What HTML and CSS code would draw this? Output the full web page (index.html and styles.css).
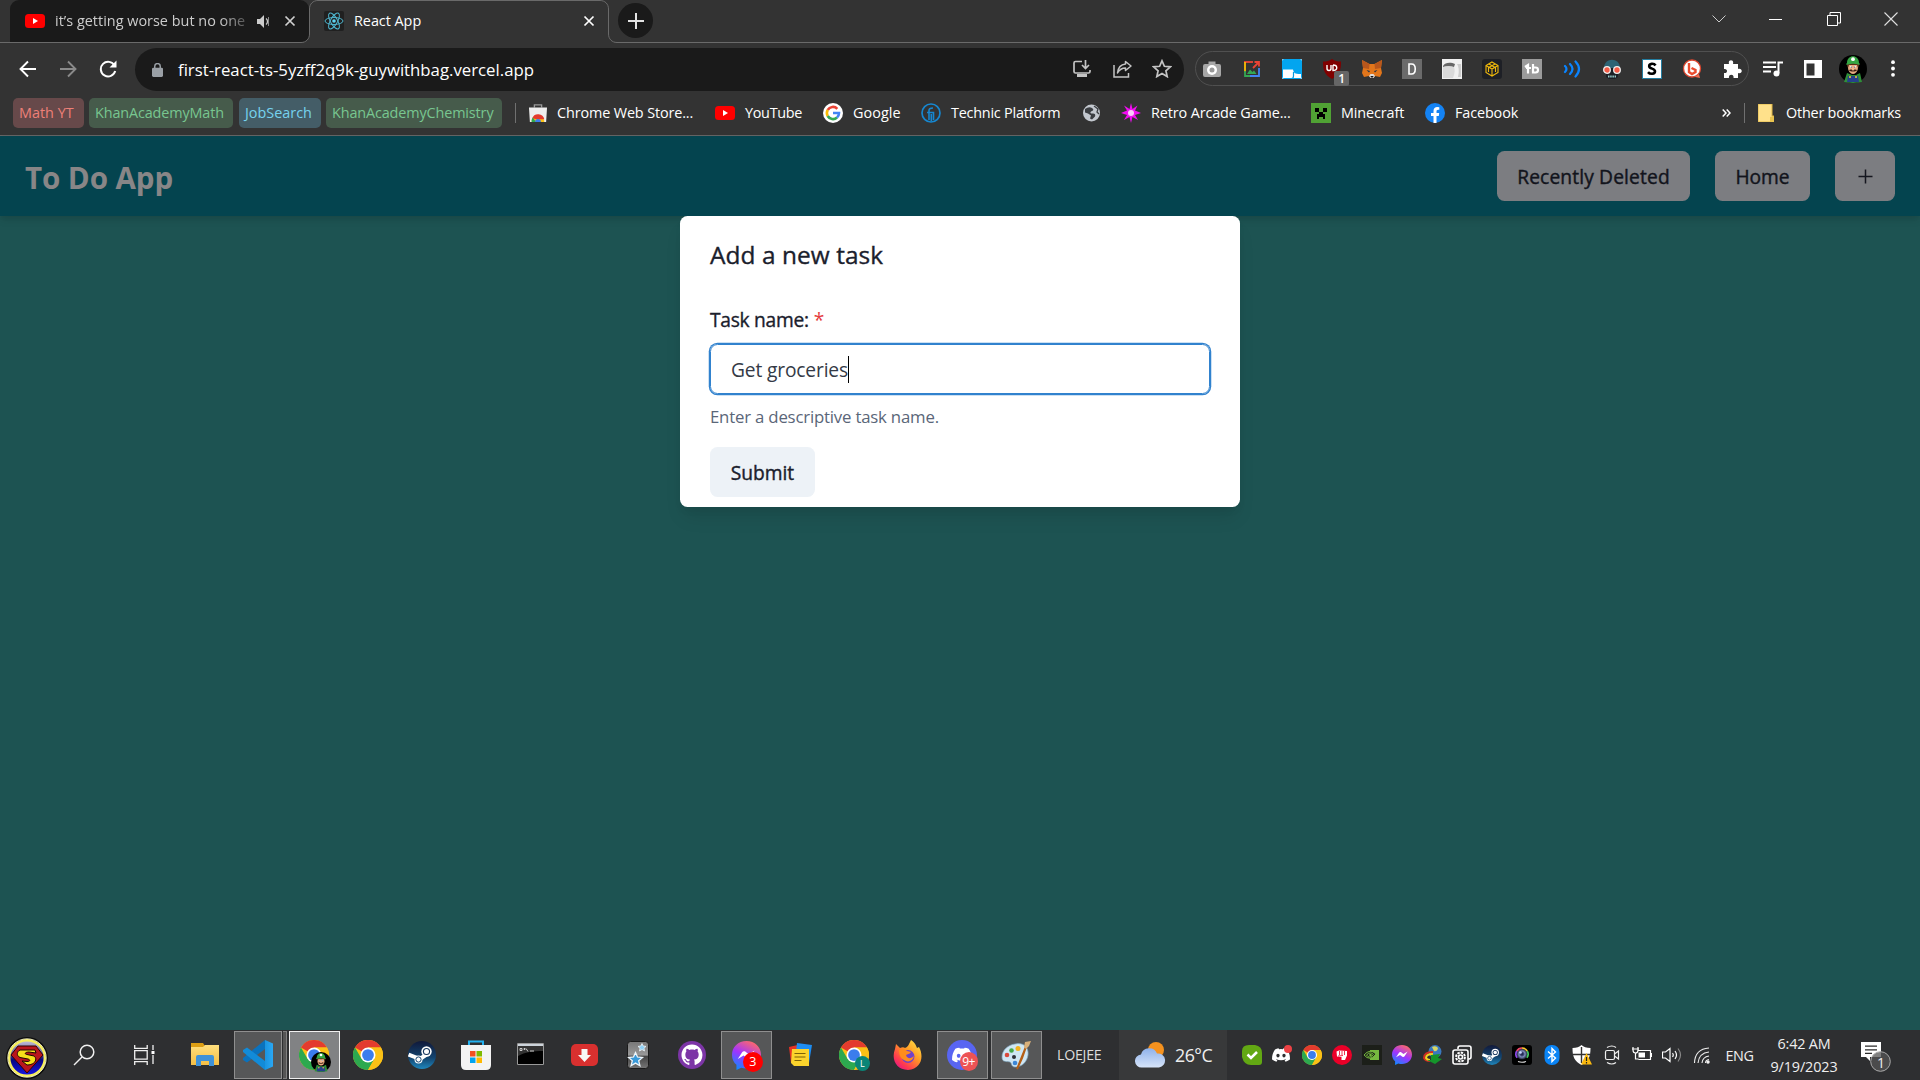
FILE: index.html
```html
<!DOCTYPE html>
<html lang="en">
<head>
<meta charset="utf-8">
<title>React App</title>
<link rel="stylesheet" href="styles.css">
</head>
<body>
<svg class="defs" aria-hidden="true">
  <defs>
    <linearGradient id="g-vs" x1="0" y1="0" x2="1" y2="0"><stop offset="0" stop-color="#1a94e0"/><stop offset="1" stop-color="#2aa8f5"/></linearGradient>
    <linearGradient id="g-msg" x1="0.2" y1="1" x2="0.7" y2="0"><stop offset="0" stop-color="#0a8cff"/><stop offset="0.5" stop-color="#a033ff"/><stop offset="1" stop-color="#ff6a68"/></linearGradient>
    <linearGradient id="g-steam" x1="0" y1="0" x2="0" y2="1"><stop offset="0" stop-color="#11193a"/><stop offset="0.6" stop-color="#13446f"/><stop offset="1" stop-color="#1f87bd"/></linearGradient>
    <linearGradient id="g-ff" x1="1" y1="0" x2="0.2" y2="1"><stop offset="0" stop-color="#fff04a"/><stop offset="0.45" stop-color="#ff9a25"/><stop offset="0.8" stop-color="#ff3a4f"/><stop offset="1" stop-color="#e31587"/></linearGradient>
    <linearGradient id="g-cloud" x1="0" y1="0" x2="0" y2="1"><stop offset="0" stop-color="#8fb2ea"/><stop offset="1" stop-color="#d6e4f9"/></linearGradient>
    <linearGradient id="g-folder" x1="0" y1="0" x2="0" y2="1"><stop offset="0" stop-color="#ffdf7d"/><stop offset="1" stop-color="#f5bf45"/></linearGradient>
    <linearGradient id="g-orb" x1="0" y1="0" x2="0" y2="1"><stop offset="0" stop-color="#c9c4dc"/><stop offset="0.35" stop-color="#67679f"/><stop offset="0.55" stop-color="#07077e"/><stop offset="1" stop-color="#1616e8"/></linearGradient>
    <linearGradient id="g-anki" x1="0" y1="0" x2="0" y2="1"><stop offset="0" stop-color="#777"/><stop offset="0.5" stop-color="#999"/><stop offset="0.55" stop-color="#444"/><stop offset="1" stop-color="#777"/></linearGradient>
    <radialGradient id="g-lens"><stop offset="0.2" stop-color="#222a55"/><stop offset="0.55" stop-color="#7d8dbd"/><stop offset="1" stop-color="#15182a"/></radialGradient>

    <symbol id="chrome" viewBox="0 0 48 48">
      <circle cx="24" cy="24" r="24" fill="#fbc116"/>
      <path d="M24 24 3.200 12A24 24 0 0 1 44.800 12H24Z" fill="#e33b2e"/>
      <path d="M3.200 12A24 24 0 0 0 24 48L34.400 30 13.600 30Z" fill="#2da94f"/>
      <path d="M24 12H44.800A24 24 0 0 1 24 48L34.400 30Z" fill="#fbc116"/>
      <circle cx="24" cy="24" r="12" fill="#fff"/><circle cx="24" cy="24" r="9.400" fill="#3b7ded"/>
    </symbol>
    <symbol id="youtube" viewBox="0 0 20 18">
      <rect width="20" height="18" rx="4" fill="#f00"/><path d="M8 6v6l5-3z" fill="#fff"/>
    </symbol>
    <symbol id="luigi" viewBox="0 0 28 28">
      <circle cx="14" cy="14" r="14" fill="#000"/>
      <path d="M5 27 8 18l5 2h4l4-2 2 9-9 1z" fill="#2f8f39"/>
      <path d="M9 21h10l1 6H8z" fill="#26408c"/><circle cx="11" cy="22" r="1" fill="#f2cf35"/><circle cx="17" cy="22" r="1" fill="#f2cf35"/>
      <ellipse cx="14" cy="12.500" rx="5" ry="6.500" fill="#e9ad82"/>
      <path d="M8 11V8h12v3l-1 2-.7-3H9.700L9 13z" fill="#5b2c17"/>
      <path d="M8 8c0-9 12-9 12 0 1 .5 1 2 0 1.800-4-1.500-8-1.500-12 0-1 .2-1-1.300 0-1.800z" fill="#35a743"/>
      <circle cx="14" cy="4.200" r="1.900" fill="#fff"/>
      <circle cx="12" cy="11.800" r="1" fill="#fff"/><circle cx="16" cy="11.800" r="1" fill="#fff"/><circle cx="12.300" cy="12" r=".6" fill="#124"/><circle cx="15.700" cy="12" r=".6" fill="#124"/>
      <path d="M10 15c2-1 6-1 8 0-1 2-7 2-8 0z" fill="#3a1b10"/><circle cx="14" cy="14" r="1.500" fill="#f0b58c"/>
    </symbol>
    <symbol id="steam" viewBox="0 0 28 28">
      <circle cx="14" cy="14" r="14" fill="url(#g-steam)"/>
      <path d="M.6 13.500 12 18l6.500-4.500" fill="none" stroke="#fff" stroke-width="4"/>
      <circle cx="18.500" cy="10.500" r="5.200" fill="#fff"/><circle cx="18.500" cy="10.500" r="3.600" fill="#15345c"/><circle cx="18.500" cy="10.500" r="2.500" fill="#fff"/>
      <circle cx="10.500" cy="18.500" r="4" fill="#fff"/><circle cx="10.500" cy="18.500" r="2.600" fill="none" stroke="#16456f" stroke-width="1"/>
    </symbol>
    <symbol id="messenger" viewBox="0 0 28 28">
      <path d="M14 0C6 0 0 5.700 0 13.400c0 4 1.600 7.300 4.300 9.500V28l4.600-2.200c1.600.5 3.300.8 5.100.8 8 0 14-5.600 14-13.300S22 0 14 0z" fill="url(#g-msg)"/>
      <path d="M5.600 17.300l4.200-6.500c.7-1 2-1.300 3-.6l3.300 2.500 5.700-3.500-4.200 6.600c-.7 1-2 1.300-3 .6l-3.400-2.500z" fill="#fff"/>
    </symbol>
    <symbol id="discord-face" viewBox="0 0 24 18">
      <path d="M20 1.500A19 19 0 0 0 15.300 0l-.7 1.300a18 18 0 0 0-5.200 0L8.700 0A19 19 0 0 0 4 1.500C1 6-.2 10.500.1 15a19 19 0 0 0 5.800 3l1.300-2-1.900-1 .5-.4c4 1.800 8.500 1.800 12.400 0l.5.4-1.900 1 1.300 2a19 19 0 0 0 5.800-3C24.300 9.700 22.900 5.400 20 1.500zM8 12.300c-1.200 0-2.200-1.100-2.200-2.500S6.800 7.400 8 7.400s2.200 1.100 2.200 2.400S9.200 12.300 8 12.300zm8 0c-1.200 0-2.200-1.100-2.200-2.500s1-2.400 2.200-2.400 2.200 1.100 2.200 2.400-1 2.500-2.200 2.500z" fill="#fff"/>
    </symbol>
  </defs>
</svg>

<header class="browser">
  <div class="tabstrip">
    <div class="tab tab-idle">
      <svg width="20" height="14" viewBox="0 0 20 14"><rect width="20" height="14" rx="3.500" fill="#f00"/><path d="M8 4v6l5-3z" fill="#fff"/></svg>
      <span class="tab-title fade">it’s getting worse but no one</span>
      <svg class="speaker" width="13" height="13" viewBox="0 0 13 13"><path d="M0 4h3l4-4v13L3 9H0z" fill="#ccc"/><path d="M9 3.500c2 1.500 2 4.500 0 6" stroke="#ccc" stroke-width="1.300" fill="none"/><path d="M11.500 2v9" stroke="#888"/></svg>
      <svg width="12" height="12" viewBox="0 0 12 12"><path d="M1.500 1.500l9 9m0-9l-9 9" stroke="#d0d0d0" stroke-width="1.700"/></svg>
    </div>
    <div class="tab tab-active">
      <svg class="tab-shape" width="316" height="43" viewBox="0 0 316 43"><path d="M0 43V42.500C5 42.500 8.500 39 8.500 34V9C8.500 4 12 .5 17 .5H299C304 .5 307.500 4 307.500 9V34C307.500 39 311 42.500 316 42.500V43Z" fill="#333"/><path d="M0 42.500C5 42.500 8.500 39 8.500 34V9C8.500 4 12 .5 17 .5H299C304 .5 307.500 4 307.500 9V34C307.500 39 311 42.500 316 42.500" fill="none" stroke="#6a6a6a"/></svg>
      <svg class="react" width="20" height="20" viewBox="0 0 20 20"><rect width="20" height="20" rx="2" fill="#202020"/><g fill="none" stroke="#4fb6cf" stroke-width="1"><ellipse cx="10" cy="10" rx="9" ry="3.500"/><ellipse cx="10" cy="10" rx="9" ry="3.500" transform="rotate(60 10 10)"/><ellipse cx="10" cy="10" rx="9" ry="3.500" transform="rotate(120 10 10)"/></g><circle cx="10" cy="10" r="1.800" fill="#5fd3ee"/></svg>
      <span class="tab-title">React App</span>
      <svg class="tab-close" width="12" height="12" viewBox="0 0 12 12"><path d="M1.500 1.500l9 9m0-9l-9 9" stroke="#fff" stroke-width="1.700"/></svg>
    </div>
    <div class="new-tab"><svg width="16" height="16" viewBox="0 0 16 16"><path d="M8 0v16M0 8h16" stroke="#e4e4e4" stroke-width="2"/></svg></div>
    <div class="window-buttons">
      <svg width="14" height="8" viewBox="0 0 14 8"><path d="M.5.500 7 7l6.500-6.500" fill="none" stroke="#ccc"/></svg>
      <svg width="14" height="14" viewBox="0 0 14 14"><path d="M0 7.500h13" stroke="#fff"/></svg>
      <svg width="14" height="14" viewBox="0 0 14 14"><path d="M.5 3.500h10v10H.5zM3 3V.500h10.500V11H11" fill="none" stroke="#fff"/></svg>
      <svg width="14" height="14" viewBox="0 0 14 14"><path d="M.5.500l13 13m0-13l-13 13" stroke="#e0e0e0" stroke-width="1.100"/></svg>
    </div>
  </div>

  <div class="toolbar">
    <div class="slot"><svg width="18" height="18" viewBox="0 0 18 18"><path d="M17 9H1.500M9 1.500 1.500 9 9 16.500" fill="none" stroke="#fff" stroke-width="1.900"/></svg></div>
    <div class="slot"><svg width="18" height="18" viewBox="0 0 18 18"><path d="M1 9h15.500M9 1.500 16.500 9 9 16.500" fill="none" stroke="#8a8a8a" stroke-width="1.900"/></svg></div>
    <div class="slot"><svg width="18" height="18" viewBox="0 0 18 18"><path d="M15.500 5.500A7.300 7.300 0 1 0 16.200 11" fill="none" stroke="#fff" stroke-width="2"/><path d="M17.500.500V7.500H10.500z" fill="#fff"/></svg></div>
    <div class="omnibox">
      <svg class="lock" width="11" height="14" viewBox="0 0 12 15"><rect x="0" y="5" width="12" height="10" rx="1.500" fill="#9aa0a6"/><path d="M3 6V3.500a3 3 0 0 1 6 0V6" fill="none" stroke="#9aa0a6" stroke-width="1.600"/></svg>
      <span class="url">first-react-ts-5yzff2q9k-guywithbag.vercel.app</span>
      <div class="slot"><svg width="18" height="18" viewBox="0 0 18 18"><path d="M9 1.500H2.500Q1 1.500 1 3v8.500Q1 13 2.500 13h13Q17 13 17 11.500V10" fill="none" stroke="#c4c4c4" stroke-width="1.700"/><path d="M12.500 0v8M9 5l3.500 3.500L16 5" fill="none" stroke="#c4c4c4" stroke-width="1.700"/><path d="M4 14h10v3H4z" fill="#c4c4c4"/></svg></div>
      <div class="slot"><svg width="19" height="18" viewBox="0 0 19 18"><path d="M1 5v12h14.500v-4" fill="none" stroke="#c4c4c4" stroke-width="1.500"/><path d="M12.500 1.500 18 6l-5.500 4.500V8C9 8 6.500 9.500 4.500 13 5 8 7.500 4.500 12.500 4z" fill="none" stroke="#c4c4c4" stroke-width="1.500" stroke-linejoin="round"/></svg></div>
      <div class="slot"><svg width="20" height="19" viewBox="0 0 20 19"><path d="M10 1.800l2.400 5.500 6 .5-4.500 4 1.300 5.800-5.200-3.100-5.200 3.100 1.300-5.800-4.500-4 6-.5z" fill="none" stroke="#c4c4c4" stroke-width="1.700"/></svg></div>
    </div>
    <div class="extensions">
      <svg viewBox="0 0 20 20"><path d="M6.500 2.500h7v2.500H17q2 0 2 2v9q0 2-2 2H3q-2 0-2-2V7q0-2 2-2h3.500z" fill="#a7a7a7"/><circle cx="10" cy="11" r="5" fill="#fff"/><circle cx="10" cy="11" r="2.500" fill="#999"/></svg>
      <svg viewBox="0 0 20 20" fill="none" stroke-width="1.800"><path d="M11 3H2" stroke="#ea4335"/><path d="M3 3v10" stroke="#fbbc05"/><path d="M3 12v5h5" stroke="#34a853"/><path d="M8 17h9V9" stroke="#4285f4"/><path d="M11 9l6-6m-4.500 0H17v4.500" stroke="#ea4335"/><path d="M5 15l3-4.500 2.500 2.500 1.500-1.500 2.500 3.500z" fill="#34a853"/></svg>
      <svg viewBox="0 0 20 20"><rect width="20" height="20" rx="1" fill="#fff"/><path d="M1 1h18v14c-7 0-7-1-8-4.500H1z" fill="#03a5ef"/><path d="M11.500 13v4q0 2.500-2 2.500" fill="none" stroke="#079be0" stroke-width="1.200"/><rect x=".5" y=".5" width="19" height="19" rx="1" fill="none" stroke="#03a5ef"/></svg>
      <div class="ext-badged"><svg viewBox="0 0 20 20"><path d="M10 0c3 2 5 2.500 9 2.500 0 8-1 13-9 17.500C2 15.500 1 10.500 1 2.500 5 2.500 7 2 10 0z" fill="#800000"/><path d="M5 6v3.500q0 2 2 2t2-2V6m2 0v5.500c5 0 5-5.500 0-5.500" fill="none" stroke="#fff" stroke-width="1.400"/></svg><span class="ext-badge">1</span></div>
      <svg viewBox="0 0 20 20"><path d="M0 1l7.500 4h5L20 1l-1 8 1 5-2 4-5-1-1.500 2h-3L7 17l-5 1-2-4 1-5z" fill="#e2761b"/><path d="M0 1l7.500 4L7 10 1 9zM20 1l-7.500 4 .5 5 6-1z" fill="#b9571c"/><path d="M7 17l1.500-2h3l1.500 2-1.500 2h-3z" fill="#ddd"/><path d="M4.500 11l3.500 1-1 1.500zM15.500 11 12 12l1 1.500z" fill="#233447"/><path d="M8.500 17h3l-.5 1.500H9z" fill="#161616"/></svg>
      <svg viewBox="0 0 20 20"><rect width="20" height="20" fill="#6b6b6b"/><path d="M7 5v10h2.500c5 0 5-10 0-10z" fill="none" stroke="#fff" stroke-width="1.600"/></svg>
      <svg viewBox="0 0 20 20"><rect width="20" height="20" fill="#f0f0f0"/><path d="M1 7C3 3 9 3 13 5l-1 3C8 7 4 7 1 8z" fill="#666"/><path d="M1 8c4-1 8-1 11 0 1 3 1 6-1 11H1z" fill="#dadada"/><path d="M15 5q3 4 1 13h3V5z" fill="#ccc"/></svg>
      <svg viewBox="0 0 20 20"><rect width="20" height="20" rx="3" fill="#1e2026"/><path d="M10 3l6 3.500v7L10 17l-6-3.500v-7zM4 6.500l6 3.500 6-3.500M10 10v7M7 5l6 3.500M13 5 7 8.500M6.500 8v5M13.500 8v5" fill="none" stroke="#f0b90b" stroke-width="1.100"/></svg>
      <svg viewBox="0 0 20 20"><rect width="20" height="20" fill="#9b9b9b"/><path d="M3 8l3-2v8.500M4 9h5M11 5v8.500h2.500q2.500 0 2.500-2.500t-2.500-2.500H11" fill="none" stroke="#fff" stroke-width="2.200"/></svg>
      <svg viewBox="0 0 20 20" fill="none" stroke="#0a84ff" stroke-width="2.200" stroke-linecap="round"><path d="M3 7q3 3 0 6M8 5q5 5 0 10M13.500 2.500q7 7.500 0 15"/></svg>
      <svg viewBox="0 0 20 20"><path d="M2 9C2-2 18-2 18 9z" fill="#2c6475"/><path d="M4 9h12v9l-3 2H7l-3-2z" fill="#1c1f25"/><circle cx="5" cy="11" r="3.300" fill="#f55a45" stroke="#eee" stroke-width="1.300"/><circle cx="15" cy="11" r="3.300" fill="#f55a45" stroke="#eee" stroke-width="1.300"/><path d="M6 17.500h8" stroke="#9cc" stroke-width="2" stroke-dasharray="1.500 .7"/></svg>
      <svg viewBox="0 0 20 20"><rect x=".5" y=".5" width="19" height="19" fill="#fff" stroke="#247da0"/><path d="M13.500 6.500C12 4 7 4.300 7.200 7.300c.2 2.700 5.800 2 5.800 5 0 3.200-5 3.200-7 .8" fill="none" stroke="#000" stroke-width="2.600"/></svg>
      <svg viewBox="0 0 20 20"><circle cx="10" cy="9.500" r="8.500" fill="#fff" stroke="#df4830" stroke-width="1.300"/><path d="M13 18l5 1-1-4z" fill="#f06b50"/><path d="M7 4v9l3 2 3.500-2v-2L9.500 9" fill="none" stroke="#eb4b2e" stroke-width="2.400"/></svg>
      <svg viewBox="0 0 20 20"><path d="M2 5h5c-1.500-5 5.500-5 4 0h5v5c5-1.500 5 5.500 0 4v5h-4.500c1-4.500-5.500-4.500-4.500 0H2v-5c4 1 4-5 0-4z" fill="#fff"/></svg>
    </div>
    <div class="slot slot-first"><svg width="20" height="16" viewBox="0 0 20 16"><path d="M0 1.500h13M0 6h13M0 10.500h8" stroke="#fff" stroke-width="1.800"/><path d="M15.500 12V1.500H20" fill="none" stroke="#fff" stroke-width="2"/><circle cx="13.500" cy="12.500" r="3" fill="#fff"/></svg></div>
    <div class="slot"><svg width="18" height="18" viewBox="0 0 18 18"><path d="M0 0h18v18H0z" fill="#fff"/><path d="M2.500 3.500h8v12h-8z" fill="#333"/></svg></div>
    <div class="slot"><svg width="28" height="28"><use href="#luigi"/></svg></div>
    <div class="slot"><svg width="4" height="17" viewBox="0 0 4 17" fill="#fff"><circle cx="2" cy="2.200" r="1.900"/><circle cx="2" cy="8.500" r="1.900"/><circle cx="2" cy="14.800" r="1.900"/></svg></div>
  </div>

  <nav class="bookmarks">
    <span class="chip chip-red chip-math">Math YT</span>
    <span class="chip chip-green chip-kam">KhanAcademyMath</span>
    <span class="chip chip-blue chip-job">JobSearch</span>
    <span class="chip chip-green chip-kac">KhanAcademyChemistry</span>
    <i class="divider divider-left"></i>
    <span class="mark mark-store"><svg width="18" height="18" viewBox="0 0 20 20"><path d="M6 4V1h8v3" fill="none" stroke="#999" stroke-width="1.500"/><path d="M0 4h20l-1 16H1z" fill="#eee"/><path d="M3 20a7 7 0 0 1 14 0z" fill="#fbc116"/><path d="M3.500 16A7 7 0 0 1 17 17H10z" fill="#e33b2e"/><path d="M3 20a7 7 0 0 1 1-5l4 5z" fill="#2da94f"/><path d="M6.800 20a3.200 3.200 0 0 1 6.400 0z" fill="#3b7ded"/></svg>Chrome Web Store...</span>
    <span class="mark mark-youtube"><svg width="20" height="14" viewBox="0 0 20 14"><rect width="20" height="14" rx="3.500" fill="#f00"/><path d="M8 4v6l5-3z" fill="#fff"/></svg>YouTube</span>
    <span class="mark mark-google"><svg width="20" height="20" viewBox="0 0 20 20"><circle cx="10" cy="10" r="10" fill="#fff"/><g fill="none" stroke-width="2.600"><path d="M4.700 7A6 6 0 0 1 14.300 5.800" stroke="#ea4335"/><path d="M4.700 7a6 6 0 0 0 0 6" stroke="#fbbc05"/><path d="M4.700 13a6 6 0 0 0 9.300 1.500" stroke="#34a853"/><path d="M14 14.500A6 6 0 0 0 16 10h-6" stroke="#4285f4"/></g></svg>Google</span>
    <span class="mark mark-technic"><svg width="20" height="20" viewBox="0 0 20 20" fill="none" stroke="#1687d0"><circle cx="10" cy="10" r="9" stroke-width="1.700"/><path d="M8 17V7.500q0-2.500 4-2.500M6 9.500h6.500V17M10.300 11v7" stroke-width="1.600"/></svg>Technic Platform</span>
    <span class="mark mark-globe"><svg width="20" height="18" viewBox="0 0 20 18"><circle cx="9.500" cy="9" r="8.500" fill="#c3c8cf"/><path d="M3 5q4-3 7-1 3 2-1 3.500-2 2 2 2 3 0 2 3l-3 3-2-1 1-3-3-2-3-1z" fill="#3b3e42"/><path d="M12 2l4 3-1 3 2 2" fill="none" stroke="#3b3e42" stroke-width="1.300"/></svg></span>
    <span class="mark mark-retro"><svg width="20" height="20" viewBox="0 0 20 20"><path d="M10 0l1.500 6 5-3.500L14 7.500l6 2.500-6 2 3 5-5.500-3L10 20l-1.500-6L3 17l3-5-6-2 6-2.500-3-5 5.500 3.500z" fill="#f20df2"/><circle cx="10" cy="10" r="3" fill="#fbc9fb"/></svg>Retro Arcade Game...</span>
    <span class="mark mark-minecraft"><svg width="20" height="20" viewBox="0 0 20 20"><path d="M0 0h20v20H0z" fill="#50a234"/><path d="M4 5h4v4h4V5h4v4h-4v2h2v5h-2v-2H8v2H6v-5h2V9H4z" fill="#000"/></svg>Minecraft</span>
    <span class="mark mark-facebook"><svg width="20" height="20" viewBox="0 0 20 20"><circle cx="10" cy="10" r="10" fill="#1483f4"/><path d="M8.500 20v-7H6v-3h2.500V8c0-2.600 1.500-4 3.800-4l2 .2v2.500h-1.200c-1.200 0-1.600.8-1.600 1.500V10h2.700l-.4 3h-2.300v7z" fill="#fff"/></svg>Facebook</span>
    <svg class="overflow" width="9" height="8" viewBox="0 0 9 8"><path d="M.7.500 4 4 .7 7.500M4.700.500 8 4 4.700 7.500" fill="none" stroke="#fff" stroke-width="1.500"/></svg>
    <i class="divider divider-right"></i>
    <span class="mark mark-other"><svg width="16" height="18" viewBox="0 0 16 18"><path d="M0 0h14v12h2v6H0z" fill="#ffe18b"/><path d="M0 0h14v12h2v6H0z" fill="none" stroke="#dfb745"/><path d="M12 18v-5l4-1v6z" fill="#e9c44f"/></svg>Other bookmarks</span>
  </nav>
</header>

<main class="page">
  <div class="navbar">
    <h1>To Do App</h1>
    <button class="btn btn-dim btn-deleted">Recently Deleted</button>
    <button class="btn btn-dim btn-home">Home</button>
    <button class="btn btn-dim btn-plus" aria-label="Add"><svg width="15" height="15" viewBox="0 0 15 15"><path d="M7.500.500v14M.5 7.500h14" stroke="#14161f" stroke-width="1.500"/></svg></button>
  </div>
  <form class="modal">
    <h2>Add a new task</h2>
    <label>Task name:<b>*</b></label>
    <div class="field"><span>Get groceries</span><i class="caret"></i></div>
    <p>Enter a descriptive task name.</p>
    <button type="button" class="btn btn-submit">Submit</button>
  </form>
</main>

<footer class="taskbar">
  <div class="start"><svg width="42" height="42" viewBox="0 0 42 42"><circle cx="21" cy="21" r="21" fill="#0b0b0b"/><circle cx="21" cy="21" r="17.800" fill="url(#g-orb)" stroke="#f6ee5a" stroke-width="2.400"/><circle cx="21" cy="21" r="19.200" fill="none" stroke="#fdfbd0" stroke-width=".9"/><path d="M12 9h18l7 9-16 18L5 18z" fill="#b9151d" stroke="#300"/><path d="M14 13h15l1 3-7-1c-4 0-5 2-2 2.500l7 1.500c4 3 1 9-7 9l-5-4 5 .5c4 0 3-2 1-2.500l-8-1.500c-4-2-3-6 0-7.500z" fill="#f5df1a" stroke="#1c0600"/></svg></div>
  <div class="search"><svg width="22" height="22" viewBox="0 0 22 22" fill="none" stroke="#f0f0f0" stroke-width="1.500"><circle cx="14" cy="8" r="6.800"/><path d="M9 13 1 21"/></svg></div>
  <div class="task-view"><svg width="21" height="20" viewBox="0 0 21 20" fill="none" stroke="#f0f0f0" stroke-width="1.300"><path d="M.7 0v3.300h12.500V0M.7 20v-3.300h12.500V20M.7 5.700h12.500v8.500H.7zM19 0v5M19 10v9"/><path d="M17.500 6h3v3h-3z" fill="#fff" stroke="none"/></svg></div>
  <div class="app app-explorer"><svg width="28" height="24" viewBox="0 0 28 24"><path d="M0 0h12l2 3-2 3H0z" fill="#dd9f14"/><path d="M0 4h12l2-2h14v20H0z" fill="url(#g-folder)"/><path d="M5 23V14q0-2 2-2h14q2 0 2 2v9h-5v-5h-8v5z" fill="#3f92d8"/></svg></div>
  <div class="app app-stack"><div class="app-box"><svg width="30" height="30" viewBox="0 0 30 30"><path d="M22 0v9L4 22.500 0 20v-2z" fill="#0a72bd"/><path d="M22 30v-9L4 7.500 0 10v2z" fill="#128bd8"/><path d="M22 0l8 3.500v23L22 30z" fill="url(#g-vs)"/></svg></div><i></i></div>
  <div class="app"><div class="app-box app-current"><svg width="30" height="30"><use href="#chrome"/></svg><svg class="corner-luigi" width="20" height="20"><use href="#luigi"/></svg></div></div>
  <div class="app"><svg width="30" height="30"><use href="#chrome"/></svg></div>
  <div class="app"><svg width="28" height="28"><use href="#steam"/></svg></div>
  <div class="app"><svg width="30" height="30" viewBox="0 0 30 30"><path d="M8 7V1.500h14V7" fill="none" stroke="#22b1f0" stroke-width="2"/><path d="M0 5h30v20q0 5-5 5H5q-5 0-5-5z" fill="#f3f3f3"/><path d="M9 11h5.500v5.500H9z" fill="#f25022"/><path d="M15.500 11H21v5.500h-5.500z" fill="#7fba00"/><path d="M9 17.500h5.500V23H9z" fill="#00a4ef"/><path d="M15.500 17.500H21V23h-5.500z" fill="#ffb900"/></svg></div>
  <div class="app"><svg class="lift" width="27" height="22" viewBox="0 0 27 22"><path d="M.5.500h26v21H.5z" fill="#000" stroke="#999"/><path d="M1 1h25v2H1z" fill="#ccd3da"/><path d="M1 3h25v5C16 8 8 9 1 13z" fill="#333"/><path d="M3 5.500h2v2H3zm4 0h1v1H7zm2 0l2 3m2-.500h4" stroke="#ccc" fill="none"/></svg></div>
  <div class="app"><svg width="27" height="22" viewBox="0 0 27 22"><rect width="27" height="22" rx="5" fill="#d9302f"/><path d="M10.500 5h6v6h3.500l-6.500 7L7 11h3.500z" fill="#f7f7f7"/></svg></div>
  <div class="app"><svg width="22" height="28" viewBox="0 0 22 28"><rect x=".5" y=".5" width="21" height="27" rx="3" fill="url(#g-anki)" stroke="#1a1a1a"/><path d="M8.500 11.500l2 4.500 5 .5-3.800 3.200 1.200 5-4.400-2.600-4.400 2.600 1.200-5L1.500 16.500l5-.5z" fill="#3a9ad9" stroke="#eef6fb" stroke-width="1.300"/><path d="M15 2.500l1.200 2.500 2.800.4-2 1.900.5 2.700-2.500-1.400L12.500 10l.5-2.700-2-1.900 2.800-.4z" fill="#8fd0f5" stroke="#fff" stroke-width=".7"/></svg></div>
  <div class="app"><svg width="28" height="28" viewBox="0 0 28 28"><circle cx="14" cy="14" r="14" fill="#7c35a6"/><path transform="translate(3.500 3.500) scale(1.310)" fill="#fff" d="M8 0C3.580 0 0 3.580 0 8c0 3.540 2.290 6.530 5.470 7.590.4.070.55-.17.55-.38 0-.19-.01-.82-.01-1.490-2.010.37-2.530-.49-2.690-.94-.09-.23-.48-.94-.82-1.130-.28-.15-.68-.52-.01-.53.63-.01 1.080.58 1.230.82.72 1.210 1.870.87 2.330.66.070-.52.28-.87.51-1.070-1.780-.2-3.640-.89-3.640-3.950 0-.87.31-1.590.82-2.150-.08-.2-.36-1.020.08-2.120 0 0 .67-.21 2.200.82.64-.18 1.320-.27 2-.27s1.360.09 2 .27c1.530-1.040 2.200-.82 2.200-.82.44 1.100.16 1.920.08 2.120.51.56.82 1.270.82 2.150 0 3.070-1.870 3.750-3.650 3.950.29.25.54.73.54 1.480 0 1.070-.01 1.930-.01 2.200 0 .21.15.46.55.38A8.010 8.010 0 0 0 16 8c0-4.420-3.580-8-8-8z"/></svg></div>
  <div class="app"><div class="app-box"><svg width="29" height="29"><use href="#messenger"/></svg><span class="count count-red">3</span></div></div>
  <div class="app"><svg width="24" height="24" viewBox="0 0 24 24"><path d="M1 4 14 1l3 16L3 20z" fill="#e83325"/><path d="M9 0l15 2-3 18-14-2z" fill="#1d8df2"/><path d="M4 6h17v17H6l-3-3z" fill="#fbd32c"/><path d="M6.500 10.500h11M6.500 14h11M6.500 17.500h7" stroke="#7d6307" stroke-width="1.200"/></svg></div>
  <div class="app"><div class="app-plain"><svg width="30" height="30"><use href="#chrome"/></svg><span class="count count-teal">L</span></div></div>
  <div class="app"><svg width="30" height="30" viewBox="0 0 30 30"><path d="M18 0c4 3 5 5 6 8l2-1c5 9 3 22-11 23C3 30-2 19 2 9l1-5 4 4c2-1 4-1 5 0 3-1 4-4 6-8z" fill="url(#g-ff)"/><circle cx="15" cy="16.500" r="6.500" fill="#7142c9"/><path d="M6 10c3-2 6-1 8 1l4 1c-1 2-4 2-5 3 1 4 5 4 8 1-1 5-6 7-10 4-4-2-5-6-5-10z" fill="#ff8c1c"/></svg></div>
  <div class="app"><div class="app-box"><svg width="30" height="30" viewBox="0 0 30 30"><circle cx="15" cy="15" r="15" fill="#5865f2"/><use href="#discord-face" x="5" y="7.500" width="20" height="15"/></svg><span class="count count-coral">9+</span></div></div>
  <div class="app"><div class="app-box"><svg width="30" height="30" viewBox="0 0 30 30"><path d="M14 4C22 2 28 7 27 15c-1 7-6 12-13 12-4 0-3-4-5-5-3-1-8 1-8-5C1 10 7 5 14 4z" fill="#cfe6f3" stroke="#82a9c2" stroke-width=".7"/><circle cx="6" cy="15" r="2.300" fill="#d94a3c"/><circle cx="10.500" cy="10.500" r="2.300" fill="#45a848"/><circle cx="17" cy="8.500" r="2.500" fill="#f3b11f"/><circle cx="13" cy="17" r="2" fill="#2d2f36"/><circle cx="14" cy="23" r="2.300" fill="#3c86d5"/><path d="M26 4 16 29l5-11z" fill="#c46a1c" stroke="#b35e15" stroke-width="2"/><path d="M23 7l1-5 6-1-2 5-3 3z" fill="#d9b079"/></svg></div></div>
  <span class="loejee">LOEJEE</span>
  <div class="weather"><svg width="31" height="26" viewBox="0 0 31 26"><circle cx="21" cy="8" r="8" fill="#f5921e"/><path d="M7 25.500a6.500 6.500 0 0 1-1-13 8.500 8.500 0 0 1 16-1 7 7 0 0 1 2 14z" fill="url(#g-cloud)"/></svg><span>26°C</span></div>
  <div class="tray">
    <svg viewBox="0 0 20 20"><path d="M7 0h6q7 1 7 8v9q0 3-3 3H9Q2 20 0 12V6q0-6 7-6z" fill="#62a813"/><path d="M5.500 9.500 9 13l6-6" fill="none" stroke="#fff" stroke-width="2.500"/></svg>
    <svg viewBox="0 0 20 20"><use href="#discord-face" x="0" y="3" width="18" height="14"/><circle cx="16" cy="4" r="4" fill="#ed4245"/></svg>
    <svg viewBox="0 0 20 20"><use href="#chrome"/></svg>
    <svg viewBox="0 0 20 20"><circle cx="10" cy="10" r="10" fill="#eb0028"/><path d="M4.500 6.500 7 5.500l8 .5v4.500L13 15H9.500V12L5 11.500z" fill="#fff"/><path d="M7.500 6v4M10 6v4M12.500 6v4M6 11l5-.5" stroke="#eb0028" stroke-width=".8"/></svg>
    <svg viewBox="0 0 20 20"><path d="M0 0h20v20H0z" fill="#1c1f19"/><path d="M8 5h9v10H8z" fill="#76b83f"/><path d="M2 10q6-7 12-1-6 8-12 1zM4.500 10q4-4 7-.5-4 5-7 .5z" fill="#1c1f19" stroke="#76b83f" stroke-width="1"/><circle cx="8.500" cy="10" r="1.300" fill="#76b83f"/></svg>
    <svg viewBox="0 0 20 20"><use href="#messenger"/></svg>
    <svg viewBox="0 0 20 20"><circle cx="13" cy="6.500" r="6.500" fill="#3978bf"/><path d="M10 2q4-2 6 1-1 4-4 3z" fill="#d8d664"/><path d="M11 7C5 7 2 9 2 13q1 3 6 3" fill="none" stroke="#d12d21" stroke-width="2"/><path d="M11 9c-5 0-7 1.500-7 4q1 2 4 2" fill="none" stroke="#f2d321" stroke-width="2"/><path d="M9 10l9-1-2 4 4 1-7 5-8-4h4z" fill="#15952b"/></svg>
    <svg viewBox="0 0 20 20" fill="none" stroke="#fff" stroke-width="1.600"><path d="M6 4V3q0-2 2-2h9q2 0 2 2v9q0 2-2 2h-1"/><rect x="1" y="5" width="15" height="14" rx="2"/><circle cx="8.500" cy="12" r="2"/><circle cx="8.500" cy="12" r="4.400" stroke-width="2" stroke-dasharray="2.400 1"/></svg>
    <svg viewBox="0 0 20 20"><use href="#steam"/></svg>
    <svg viewBox="0 0 20 20"><rect width="20" height="20" rx="3" fill="#000"/><circle cx="10" cy="9" r="5.500" fill="url(#g-lens)"/><g fill="none" stroke-width="1.700"><path d="M5.200 12.800A6 6 0 0 1 4.800 6" stroke="#8b4be8"/><path d="M4.800 6A6 6 0 0 1 10 3" stroke="#f2476a"/><path d="M10 3a6 6 0 0 1 5.200 3" stroke="#ffc928"/><path d="M15.200 6a6 6 0 0 1-.4 6.800" stroke="#45c961"/></g><circle cx="8.500" cy="7.500" r="1.300" fill="#cfd8ff"/><path d="M6 16.500q4 1.500 8 0" fill="none" stroke="#ddd" stroke-width="1.200"/></svg>
    <svg viewBox="0 0 20 20"><rect x="2.500" y="0" width="15" height="20" rx="7" fill="#0a84f5"/><path d="M6 6.500l7.500 6.500L10 16.500v-13L13.500 7 6 13.500" fill="none" stroke="#fff" stroke-width="1.400"/></svg>
    <svg viewBox="0 0 20 20"><path d="M9.500 0q3 3 9 3c0 9-2 13-9 17-7-4-9-8-9-17q6 0 9-3z" fill="#fff"/><path d="M9.500 2v16M1 9.500h17" stroke="#333" stroke-width="1.400"/><path d="M14.500 8 20 19.500H9z" fill="#fbb90f"/><path d="M14.500 12v4m0 1v1.500" stroke="#222" stroke-width="1.200"/></svg>
    <svg viewBox="0 0 20 20" fill="none" stroke="#eee" stroke-width="1.200"><rect x="3.500" y="5.500" width="9" height="9" rx="1.500"/><path d="M12.500 9 16.500 6v8l-4-3M5 2.500q5-3 9 0M5 17.500q5 3 9 0"/></svg>
    <svg viewBox="0 0 20 20" fill="none" stroke="#fff" stroke-width="1.200"><path d="M6 5.500h12.500v9H6.500M18.500 8.500h1v3h-1M1 2v3q0 3 2.500 3T6 5V2M0 4h7M3.500 8v6h3"/><path d="M6.500 7.500H13v5H6.500z" fill="#fff" stroke="none"/></svg>
    <svg viewBox="0 0 20 20" fill="none" stroke="#fff" stroke-width="1.200"><path d="M.5 7h3L8 3.500v13L3.500 13h-3zM10.500 8q1.500 2 0 4M13 6q3 4 0 8"/><path d="M16 3.500q5 6.500 0 13" stroke="#888"/></svg>
    <svg viewBox="0 0 20 20" fill="none" stroke="#eee" stroke-width="1.100"><path d="M2.500 18Q3 4 17 3M6 18Q7 8 17 7M10 18q.5-6 7-7M13.500 18q0-3 3.500-3.500"/><circle cx="16" cy="17" r="1.200" fill="#fff"/></svg>
  </div>
  <span class="lang">ENG</span>
  <div class="clock"><span class="time">6:42 AM</span><span>9/19/2023</span></div>
  <div class="notice"><svg width="30" height="31" viewBox="0 0 30 31"><path d="M0 0h20v15H9v4l-4-4H0z" fill="#fff"/><path d="M4 4.200h12M4 7.800h12M4 11.400h7" stroke="#2b2b2b" stroke-width="1.300"/><circle cx="19.500" cy="19.500" r="9.800" fill="#555" fill-opacity=".75" stroke="#aaa"/></svg><span>1</span></div>
</footer>
</body>
</html>
```
FILE: styles.css
```css
* { box-sizing: border-box; }
body {
  margin: 0;
  width: 1920px;
  height: 1080px;
  overflow: hidden;
  display: flex;
  flex-direction: column;
  font-family: "Open Sans", "Noto Sans", sans-serif;
  font-size: 14.4px;
  letter-spacing: -0.12px;
  white-space: nowrap;
}
svg { flex: none; display: block; }
.defs { position: absolute; width: 0; height: 0; }

/* Browser frame */
.browser { height: 136px; background: #333; border-bottom: 1px solid #656565; color: #fff; }
.tabstrip { height: 43px; display: flex; border-bottom: 1px solid #6a6a6a; padding-left: 10px; }
.tab { display: flex; align-items: center; height: 42px; }
.tab-idle { width: 299px; padding: 0 0 0 15px; background: #1a1a1a; border-radius: 9px 9px 0 0; color: #ccc; }
.tab-title { margin-left: 10px; padding-bottom: 1px; }
.fade { width: 191px; overflow: hidden; letter-spacing: 0.02px; mask-image: linear-gradient(to right, #000 165px, rgba(0, 0, 0, 0.3) 191px); }
.speaker { margin: 0 14px 0 11px; }
.tab-active { position: relative; width: 300px; padding-left: 15px; }
.tab-shape { position: absolute; left: -8px; top: 0; }
.react { position: relative; }
.tab-active .tab-title { position: relative; margin-left: 10px; letter-spacing: -0.03px; }
.tab-close { position: relative; margin-left: auto; margin-right: 14px; }
.new-tab { width: 35px; height: 35px; margin: 3px 0 0 9px; border-radius: 50%; background: #1a1a1a; display: grid; place-items: center; }
.window-buttons { margin-left: auto; height: 37px; display: flex; align-items: center; gap: 43.500px; padding-right: 22px; }

.toolbar { height: 53px; display: flex; align-items: center; padding: 0 0 0 8px; }
.slot { width: 40px; display: flex; justify-content: center; flex: none; padding-bottom: 2px; }
.toolbar > .slot:nth-child(-n+3) { padding-right: 1px; }
.slot-first { margin-left: 4px; }
.omnibox { width: 1049px; height: 43px; margin-left: 7px; border-radius: 22px; background: #1a1a1a; display: flex; align-items: center; padding: 0 2px 0 17px; }
.lock { margin-right: 15px; }
.url { flex: 1; font-size: 16.8px; letter-spacing: -0.01px; }
.extensions { width: 554px; height: 35px; margin: 0 0 2px 11px; border: 1px solid #505050; border-radius: 18px; display: flex; align-items: center; justify-content: space-between; padding: 0 6px 0 6px; }
.extensions svg { width: 20px; height: 20px; }
.ext-badged { position: relative; }
.ext-badge { position: absolute; left: 12px; top: 12px; width: 15px; height: 15px; border-radius: 2px; background: #666; font-size: 12px; font-weight: 600; line-height: 15px; text-align: center; }

.bookmarks { height: 34px; display: flex; align-items: center; padding-left: 13px; }
.chip { height: 30px; line-height: 29px; border-radius: 5px; padding-left: 6px; }
.chip-red { background: #67494a; color: #ee8078; }
.chip-green { background: #465b4b; color: #78c690; }
.chip-blue { background: #445d67; color: #76d2ee; }
.chip-math { width: 71px; margin-right: 5px; letter-spacing: 0; }
.chip-kam { width: 144px; margin-right: 6px; }
.chip-job { width: 82px; margin-right: 5px; letter-spacing: 0; }
.chip-kac { width: 176px; }
.divider { width: 1px; height: 20px; background: #707070; }
.divider-left { margin: 0 13px 0 13px; }
.mark { display: flex; align-items: center; gap: 10px; padding-bottom: 1px; flex: none; }
.mark-store { width: 186px; }
.mark-youtube { width: 108px; letter-spacing: -0.3px; }
.mark-google { width: 98px; letter-spacing: 0.05px; }
.mark-technic { width: 161px; letter-spacing: -0.22px; }
.mark-globe { width: 39px; }
.mark-retro { width: 190px; }
.mark-minecraft { width: 114px; }
.mark-facebook { width: 100px; }
.overflow { margin-left: auto; }
.divider-right { margin: 0 13px; }
.mark-other { gap: 12px; width: 162px; letter-spacing: -0.21px; }

/* To-do page */
.page { height: 894px; background: #1d5352; }
.navbar { height: 80px; display: flex; align-items: center; gap: 25px; padding: 0 25px; background: #04444f; box-shadow: 0 5px 8px -1px rgba(0, 0, 0, 0.1), 0 2px 5px -1px rgba(0, 0, 0, 0.06); }
.navbar h1 { margin: 0 auto 0 0; padding-top: 2px; font-size: 29.600px; font-weight: 700; color: #888687; letter-spacing: -0.1px; }
.btn { height: 50px; border: 0; border-radius: 7.500px; padding: 0; display: grid; place-items: center; font: 400 19.200px "Open Sans", sans-serif; -webkit-text-stroke: 0.4px; }
.btn-dim { background: #7c7d81; color: #12141c; }
.btn-deleted { width: 193px; letter-spacing: 0.14px; }
.btn-home { width: 95px; letter-spacing: -0.05px; }
.btn-plus { width: 60px; }
.modal { width: 560px; height: 291px; margin: 0 auto; padding: 20px 30px 10px; background: #fff; border-radius: 7.500px; box-shadow: 0 13px 19px -4px rgba(0, 0, 0, 0.1), 0 5px 8px -2px rgba(0, 0, 0, 0.05); color: #1a202c; }
.modal, .navbar { position: relative; }
.modal h2 { margin: 0 0 31px; height: 38px; line-height: 38px; font-size: 24.400px; font-weight: 400; letter-spacing: 0.08px; -webkit-text-stroke: 0.35px; }
.modal label { display: block; height: 30px; line-height: 30px; font-size: 19.200px; letter-spacing: -0.28px; -webkit-text-stroke: 0.35px; }
.modal label b { margin-left: 5px; font-weight: 400; color: #e53e3e; -webkit-text-stroke: 0; }
.field { height: 50px; margin-top: 9px; padding: 0 20px 0 20px; border: 1px solid #3182ce; border-radius: 7.500px; box-shadow: 0 0 0 1.250px #3182ce; display: flex; align-items: center; font-size: 19.200px; letter-spacing: -0.15px; color: #343a46; }
.caret { width: 1px; height: 27px; background: #000; }
.modal p { margin: 10px 0 18px; height: 25px; line-height: 25px; font-size: 16.800px; letter-spacing: -0.2px; color: #5a6678; }
.btn-submit { width: 105px; background: #edf2f7; color: #1a202c; letter-spacing: -0.02px; }

/* Windows taskbar */
.taskbar { height: 50px; display: flex; align-items: center; background: #2e2f31; color: #eee; }
.start { width: 58px; padding: 7px 0 0 6px; height: 50px; overflow: hidden; flex: none; }
.search { width: 54px; padding-left: 15px; flex: none; }
.task-view { width: 66px; padding-left: 22px; flex: none; }
.app { width: 54px; height: 50px; display: flex; align-items: center; justify-content: center; flex: none; }
.app-explorer { width: 55px; padding-right: 1px; }
.app-box, .app-plain { position: relative; width: 51px; height: 48px; display: flex; align-items: center; justify-content: center; }
.app-box { background: #565758; border: 1px solid #8f8f8f; }
.app-stack .app-box { width: 48px; }
.app-stack i { width: 4px; height: 48px; margin-left: 1px; background: #555; border: 1px solid #808080; border-left: 0; }
.app-current { background: #818284; border-color: #f0f0f0; }
.corner-luigi { position: absolute; left: 21px; top: 20px; }
.count { position: absolute; left: 21px; top: 20px; width: 20px; height: 20px; border-radius: 50%; line-height: 19px; text-align: center; color: #fff; letter-spacing: -0.5px; }
.count-red { background: #f00; font-size: 12.500px; }
.count-teal { left: 26px; top: 25px; width: 15px; height: 15px; line-height: 15px; background: #0a8577; font-size: 9px; }
.count-coral { left: 22px; width: 18px; height: 19px; background: #ed5355; font-size: 12px; }
.lift { margin-bottom: 2px; }
.loejee { width: 76px; padding: 0 0 2px 14px; letter-spacing: -0.25px; font-size: 14.200px; color: #ddd; }
.weather { width: 108px; height: 50px; background: #38393a; display: flex; align-items: center; gap: 9px; padding-left: 16px; font-size: 17.800px; letter-spacing: -0.52px; }
.tray { width: 490px; padding-left: 10px; display: flex; }
.tray svg { width: 20px; height: 20px; margin: 0 5px; }
.lang { width: 45px; margin-right: 1px; text-align: center; letter-spacing: -0.43px; }
.clock { width: 82px; display: flex; flex-direction: column; align-items: center; line-height: 23px; }
.time { letter-spacing: -0.18px; }
.notice { position: relative; padding: 4px 0 0 16px; }
.notice span { position: absolute; left: 32px; top: 15px; font-size: 14px; line-height: 20px; }
```
